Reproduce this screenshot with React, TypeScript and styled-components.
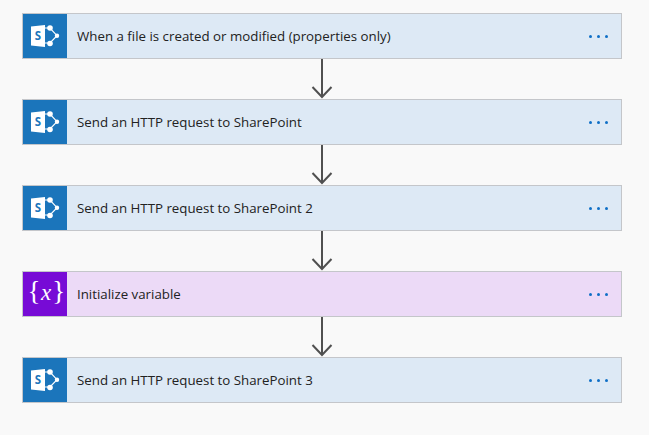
import React from "react";
import styled, { createGlobalStyle } from "styled-components";

const Global = createGlobalStyle`
  html, body { margin: 0; padding: 0; background: #f9f9f9; }
`;

const Page = styled.div`
  width: 649px;
  height: 435px;
  box-sizing: border-box;
  padding: 13px 27px 0 22px;
  background: #f9f9f9;
  display: flex;
  flex-direction: column;
  overflow: hidden;
`;

const Card = styled.div<{ $bg: string }>`
  height: 46px;
  box-sizing: border-box;
  flex: none;
  display: flex;
  align-items: stretch;
  background: ${(p) => p.$bg};
  border: 1px solid #c4c6ca;
`;

const IconBox = styled.div<{ $bg: string }>`
  width: 44px;
  flex: none;
  display: flex;
  align-items: center;
  justify-content: center;
  background: ${(p) => p.$bg};
`;

const Title = styled.div`
  flex: 1;
  padding-left: 10px;
  display: flex;
  align-items: center;
  font-family: "Open Sans", "Noto Sans", sans-serif;
  font-size: 13.3px;
  color: #222222;
  white-space: nowrap;
`;

const More = styled.div`
  flex: none;
  width: 32px;
  display: flex;
  align-items: center;
  gap: 5px;
`;

const Dot = styled.span`
  width: 3px;
  height: 3px;
  border-radius: 50%;
  background: #0f6fc6;
`;

const Connector = styled.svg`
  display: block;
  flex: none;
  width: 600px;
  height: 40px;
`;

const VarText = styled.text`
  font-family: "Liberation Serif", serif;
  fill: #ffffff;
`;

const SharePointIcon = () => (
  <svg width="32" height="28" viewBox="0 0 32 28" aria-hidden="true">
    <path d="M16 6 H21 L28 13.7 L21 21 H16" fill="none" stroke="#fff" strokeWidth="1.2" />
    <circle cx="21" cy="6" r="2.8" fill="#fff" />
    <circle cx="21" cy="21.5" r="2.8" fill="#fff" />
    <circle cx="28" cy="13.7" r="2.2" fill="#fff" />
    <path d="M2 4.5 L16 3 V25 L2 23.5 Z" fill="#fff" />
    <text x="9" y="18.2" textAnchor="middle" fill="#1b75bb" fontFamily="'Open Sans', sans-serif" fontWeight="700" fontSize="11.5">S</text>
  </svg>
);

const VariableIcon = () => (
  <svg width="44" height="44" viewBox="0 0 44 44" aria-hidden="true">
    <VarText x="4.5" y="28" fontSize="27">
      {"{"}
      <tspan fontStyle="italic" fontSize="23" dx="0.5">x</tspan>
      <tspan fontSize="27" dx="1">{"}"}</tspan>
    </VarText>
  </svg>
);

const Arrow = () => (
  <Connector viewBox="0 0 600 40" aria-hidden="true">
    <path d="M300 0 V38 M290.5 28 L300 38 L309.5 28" fill="none" stroke="#505050" strokeWidth="2" />
  </Connector>
);

type Step = { title: string; kind: "sp" | "var" };

const steps: Step[] = [
  { title: "When a file is created or modified (properties only)", kind: "sp" },
  { title: "Send an HTTP request to SharePoint", kind: "sp" },
  { title: "Send an HTTP request to SharePoint 2", kind: "sp" },
  { title: "Initialize variable", kind: "var" },
  { title: "Send an HTTP request to SharePoint 3", kind: "sp" },
];

export default function App() {
  return (
    <Page>
      <Global />
      {steps.map((s, i) => (
        <React.Fragment key={s.title}>
          {i > 0 && <Arrow />}
          <Card $bg={s.kind === "sp" ? "#dde9f5" : "#ecdaf7"}>
            <IconBox $bg={s.kind === "sp" ? "#1b75bb" : "#770bd6"}>
              {s.kind === "sp" ? <SharePointIcon /> : <VariableIcon />}
            </IconBox>
            <Title>{s.title}</Title>
            <More>
              <Dot />
              <Dot />
              <Dot />
            </More>
          </Card>
        </React.Fragment>
      ))}
    </Page>
  );
}
